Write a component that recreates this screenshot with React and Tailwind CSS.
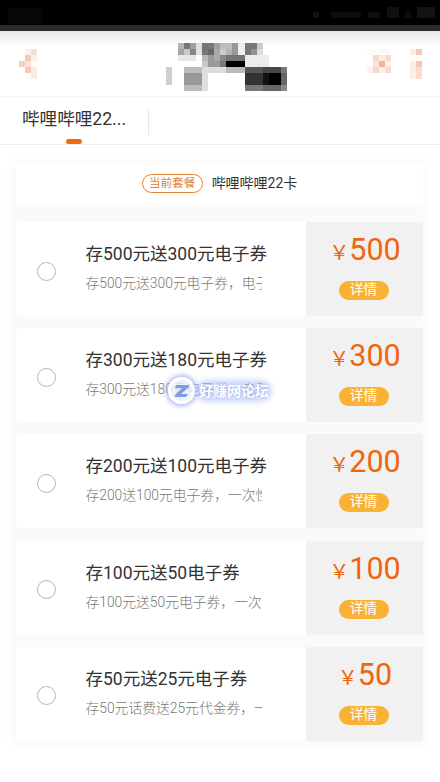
import React, { useState } from 'react';

// Recharge packages
const packages = [
  { id: 1, title: '存500元送300元电子券', desc: '存500元送300元电子券，电子券', price: '500' },
  { id: 2, title: '存300元送180元电子券', desc: '存300元送180元电子券，电子券', price: '300' },
  { id: 3, title: '存200元送100元电子券', desc: '存200送100元电子券，一次性', price: '200' },
  { id: 4, title: '存100元送50电子券', desc: '存100元送50元电子券，一次', price: '100' },
  { id: 5, title: '存50元送25元电子券', desc: '存50元话费送25元代金券，一次', price: '50' },
];

// Mosaic blocks: [x, y, width, height, color]
const titleBlocks = [
  [13, 0, 6, 6, '#b4b4b4'], [19, 0, 6, 6, '#777'], [25, 0, 6, 6, '#a0a0a0'], [31, 0, 6, 6, '#ddd'],
  [37, 0, 12, 6, '#777'], [49, 0, 6, 6, '#a2a2a2'], [55, 0, 12, 6, '#bcbcbc'], [67, 0, 6, 6, '#999'],
  [73, 0, 7, 6, '#eee'], [80, 0, 12, 6, '#777'], [92, 0, 6, 6, '#ccc'],
  [13, 6, 6, 6, '#a5a5a5'], [19, 6, 6, 6, '#c8c8c8'], [25, 6, 6, 6, '#858585'], [31, 6, 6, 6, '#e2e2e2'],
  [37, 6, 6, 6, '#777'], [43, 6, 6, 6, '#686868'], [49, 6, 6, 6, '#aaa'], [55, 6, 6, 6, '#ccc'],
  [61, 6, 6, 6, '#b5b5b5'], [67, 6, 6, 6, '#999'], [73, 6, 7, 6, '#eee'], [80, 6, 6, 6, '#777'],
  [86, 6, 6, 6, '#929292'], [92, 6, 6, 6, '#ddd'],
  [13, 12, 18, 6, '#e6e6e6'], [37, 12, 6, 6, '#b8b8b8'], [43, 12, 6, 6, '#999'], [49, 12, 6, 6, '#aaa'],
  [55, 12, 6, 6, '#888'], [61, 12, 19, 6, '#747474'], [80, 12, 24, 6, '#ececec'],
  [37, 18, 6, 6, '#c8c8c8'], [43, 18, 12, 6, '#999'], [55, 18, 6, 6, '#777'], [61, 18, 19, 6, '#000'],
  [80, 18, 24, 6, '#ececec'],
  [1, 24, 6, 18, '#cfcfcf'], [19, 24, 18, 6, '#bbb'], [37, 24, 6, 24, '#dedede'], [43, 24, 18, 6, '#ddd'],
  [61, 24, 19, 6, '#bbb'], [80, 24, 18, 6, '#565656'], [98, 24, 18, 6, '#464646'], [116, 24, 6, 6, '#777'],
  [19, 30, 18, 12, '#999'], [80, 30, 18, 12, '#333'], [98, 30, 6, 12, '#121212'], [104, 30, 12, 12, '#000'],
  [116, 30, 6, 12, '#666'],
  [19, 42, 18, 6, '#bbb'], [80, 42, 18, 6, '#777'], [98, 42, 18, 6, '#666'], [116, 42, 6, 6, '#888'],
];

const backBlocks = [
  [6, 0, 6, 6, '#fdeee8'], [12, 0, 6, 6, '#f9ddd2'], [6, 6, 6, 6, '#f5c8b8'], [12, 6, 6, 6, '#fdeee8'],
  [0, 12, 6, 6, '#f6cfc1'], [6, 12, 6, 6, '#fae2d8'], [6, 18, 6, 6, '#f5c8b8'], [12, 18, 6, 6, '#fcebe4'],
  [12, 24, 6, 6, '#fcebe4'],
];

const closeBlocks = [
  [0, 0, 24, 6, '#fefaf8'], [6, 6, 6, 6, '#f8d8cb'], [12, 6, 6, 6, '#fcebe4'], [18, 6, 6, 6, '#f8dace'],
  [6, 12, 6, 6, '#fae4da'], [12, 12, 6, 6, '#f2b49d'], [18, 12, 6, 6, '#fdeee8'],
  [0, 18, 6, 6, '#fdf1ec'], [6, 18, 6, 6, '#f8d8cb'], [12, 18, 6, 6, '#fdeee8'], [18, 18, 6, 6, '#f8dace'],
];

const moreBlocks = [
  [0, 0, 6, 6, '#fdeee6'], [6, 0, 6, 6, '#f5c9b1'], [0, 12, 6, 18, '#fdeee6'], [6, 12, 6, 6, '#f5c9b1'],
  [6, 18, 6, 12, '#f9ddd0'],
];

const statusBlocks = [
  [0, 5, 6, 6, '#121212'], [18, 5, 30, 6, '#0d0d0d'], [55, 5, 12, 6, '#0e0e0e'],
  [74, 0, 12, 11, '#101010'], [92, 5, 6, 6, '#0d0d0d'], [104, 0, 18, 11, '#121212'],
];

const Mosaic = ({ blocks, width, height, className }) => (
  <svg width={width} height={height} className={className} shapeRendering="crispEdges">
    {blocks.map(([x, y, w, h, fill], idx) => (
      <rect key={idx} x={x} y={y} width={w} height={h} fill={fill} />
    ))}
  </svg>
);

const PackageCard = ({ item, selected, onSelect }) => (
  <div className="flex h-[94px] shrink-0 rounded-sm bg-white">
    <div className="flex w-[290px] items-center">
      <button
        onClick={() => onSelect(item.id)}
        className={`mt-1 ml-[21px] size-[19px] shrink-0 rounded-full border ${
          selected ? 'border-[#f26a13] bg-[#f26a13]' : 'border-[#b5b5b5] bg-white'
        }`}
      />
      <div className="mb-0.5 ml-[29.5px] w-[184px]">
        <div className="text-[17.5px] leading-[26px] whitespace-nowrap text-[#333]">{item.title}</div>
        <div className="mt-1 w-[176px] overflow-hidden text-[13.8px] leading-[24px] font-light whitespace-nowrap text-[#777]">
          {item.desc}
        </div>
      </div>
    </div>
    <div className="flex flex-1 flex-col items-center bg-[#f1f1f1] pr-0.5">
      <div className="mt-2 ml-[3px] flex h-10 items-baseline text-[#f0660f]">
        <span className="text-[20px] leading-10">￥</span>
        <span className="text-[30.5px] leading-10">{item.price}</span>
      </div>
      <button className="mt-[11px] flex h-[19px] w-[50px] items-center justify-center rounded-full bg-[#f9b233] pb-px text-[13.8px] leading-none text-white">
        详情
      </button>
    </div>
  </div>
);

const App = () => {
  const [selectedId, setSelectedId] = useState(null);

  return (
    <div className="relative flex h-[782px] w-[440px] flex-col overflow-hidden bg-white font-[Roboto,'Noto_Sans_CJK_SC',sans-serif]">
      {/* Status bar */}
      <div className="flex h-[31px] shrink-0 items-start justify-between border-b-[6px] border-[#2c2c2c] bg-black pr-[5px] pl-2">
        <span className="mt-2 h-4 w-[34px] bg-[#070707]" />
        <Mosaic blocks={statusBlocks} width={122} height={12} className="mt-[7px]" />
      </div>

      {/* Header */}
      <div className="flex h-[66px] shrink-0 items-start border-b border-[#f7f7f7] bg-linear-to-b from-[#e6e6e6] to-white to-[14px]">
        <Mosaic blocks={backBlocks} width={18} height={30} className="mt-[18px] ml-[19px]" />
        <Mosaic blocks={titleBlocks} width={122} height={48} className="mt-3 ml-[128px]" />
        <Mosaic blocks={closeBlocks} width={24} height={24} className="mt-[18px] ml-[80px]" />
        <Mosaic blocks={moreBlocks} width={12} height={30} className="mt-[18px] ml-[19px]" />
      </div>

      {/* Tabs */}
      <div className="flex h-12 shrink-0 border-b border-[#ededed]">
        <div className="flex w-[148px] flex-col items-center">
          <div className="mt-[9px] h-[26px] text-[17.6px] leading-[26px] whitespace-nowrap text-[#333]">哔哩哔哩22...</div>
          <div className="mt-[7px] h-[5px] w-4 rounded-full bg-[#f26a13]" />
        </div>
        <div className="mt-3 h-[26px] w-px bg-[#e6e6e6]" />
      </div>

      <div className="mt-5 mr-[17px] ml-4 bg-[#fafafa] shadow-[0_0_10px_5px_#fafafa]">
        {/* Current package */}
        <div className="flex h-10 items-center justify-center gap-[9px] bg-white pb-1">
          <span className="flex h-[19px] w-[61px] items-center justify-center rounded-full border border-[#e08238] pt-px text-[11.6px] leading-none text-[#e08238]">
            当前套餐
          </span>
          <span className="text-sm text-[#333]">哔哩哔哩22卡</span>
        </div>

        {/* Package list */}
        <div className="mt-[17px] flex flex-col gap-[12.2px]">
          {packages.map((item) => (
            <PackageCard key={item.id} item={item} selected={selectedId === item.id} onSelect={setSelectedId} />
          ))}
        </div>
      </div>

      {/* Forum watermark */}
      <div className="absolute top-[377px] left-[168px] flex items-center">
        <div className="flex size-[27px] items-center justify-center rounded-full border-[3px] border-white bg-[#e9eefc]/85 shadow-[0_0_5px_2px_#a9b9f5]">
          <svg width="16" height="14" viewBox="0 0 16 14">
            <path d="M2 1H15V3L7 10H14L12 13H1V11L8 4H1Z" fill="#7f9be6" />
          </svg>
        </div>
        <span className="ml-1 rounded-full bg-[#b9c6f8]/50 text-[14px] leading-4 font-bold text-white shadow-[0_0_7px_2px_#c3cefa] [text-shadow:0_0_3px_#8ea3ee]">
          好赚网论坛
        </span>
      </div>
    </div>
  );
};

export default App;
